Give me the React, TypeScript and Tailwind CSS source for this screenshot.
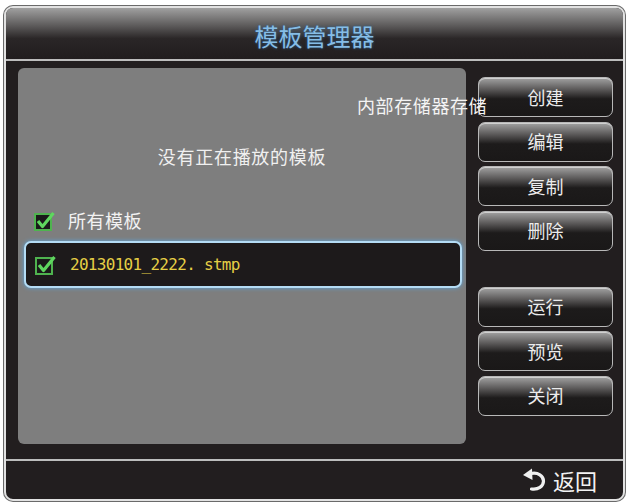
const cjk = { fontFamily: '"Noto Sans CJK SC", "Noto Sans", sans-serif' };

function Check() {
  return (
    <svg width="22" height="20" viewBox="0 0 22 20" className="shrink-0">
      <rect x="1" y="3" width="16" height="16" fill="#1a1a1a" stroke="#4fb34f" strokeWidth="2" />
      <path d="M4 10 L8.5 15.5 L19.5 2" fill="none" stroke="#5fd65f" strokeWidth="3.2" strokeLinejoin="round" />
    </svg>
  );
}

function Btn({ label }: { label: string }) {
  return (
    <div
      className="flex h-[40px] items-center justify-center rounded-[7px] border-[1.5px] border-[#b8b8b8] bg-[linear-gradient(to_bottom,#a2a2a2_0%,#5b5959_30%,#1d1b1b_55%,#1a1818_100%)] text-[18px] text-[#ececec] shadow-[inset_0_1px_0_#d0d0d0]"
      style={cjk}
    >
      {label}
    </div>
  );
}

export default function App() {
  return (
    <div className="h-[504px] w-[631px] bg-white pl-[4px] pt-[6px]">
      <div className="flex h-[495px] w-[621px] flex-col overflow-hidden rounded-[9px] border-2 border-[#e2e2e2] bg-[#221e1f] shadow-[0_0_0_1px_#6a6a6a]">
        <div className="flex h-[51px] items-center justify-center bg-[linear-gradient(to_bottom,#a0a0a0_0%,#5c5a5a_35%,#2a2627_60%,#211d1e_100%)] pt-[4px]">
          <span className="text-[24px] text-[#86bde6] [text-shadow:0_0_3px_#2c5f8a]" style={cjk}>
            模板管理器
          </span>
        </div>
        <div className="h-[2px] bg-[#bdbdbd]" />
        <div className="relative flex flex-1 gap-[12px] pb-[15px] pl-[12px] pr-[9px] pt-[7px]">
          <div className="flex w-[448px] flex-col rounded-[6px] bg-[#7e7e7e] px-[6px] pt-[75px]">
            <div className="text-center text-[18px] tracking-[0.7px] text-[#f0f0f0]" style={cjk}>
              没有正在播放的模板
            </div>
            <div className="mt-[37px] flex items-center gap-[12px] pl-[10px]">
              <Check />
              <span className="text-[18px] tracking-[0.5px] text-[#f2f2f2]" style={cjk}>
                所有模板
              </span>
            </div>
            <div className="mr-[-2px] mt-[7px] flex h-[47px] items-center gap-[13px] rounded-[7px] border-2 border-[#b4dcf5] bg-[#1d1a1b] pl-[9px] shadow-[0_0_4px_#5aa5dd]">
              <Check />
              <span
                className="text-[16px] tracking-[-0.7px] text-[#e6cf45]"
                style={{ fontFamily: '"DejaVu Sans Mono", monospace' }}
              >
                20130101_2222. stmp
              </span>
            </div>
          </div>
          <span
            className="absolute left-[351px] top-[31px] text-[18px] tracking-[0.6px] text-[#f4f4f4]"
            style={cjk}
          >
            内部存储器存储
          </span>
          <div className="flex w-[135px] flex-col gap-[4.5px] pt-[9px]">
            <Btn label="创建" />
            <Btn label="编辑" />
            <Btn label="复制" />
            <Btn label="删除" />
            <div className="h-[27px]" />
            <Btn label="运行" />
            <Btn label="预览" />
            <Btn label="关闭" />
          </div>
        </div>
        <div className="h-[2px] bg-[#bdbdbd]" />
        <div className="flex h-[38px] items-center justify-end gap-[6px] pr-[26px]">
          <svg width="26" height="26" viewBox="0 0 26 26">
            <path d="M10 6.5 C17 5 22.5 9 22.5 14 C22.5 19.5 17 23 10.5 22" fill="none" stroke="#f0f0f0" strokeWidth="3.2" strokeLinecap="round" />
            <polygon points="2,8 11,1.5 11.5,13" fill="#f0f0f0" />
          </svg>
          <span className="text-[22px] text-[#f2f2f2]" style={cjk}>
            返回
          </span>
        </div>
      </div>
    </div>
  );
}
